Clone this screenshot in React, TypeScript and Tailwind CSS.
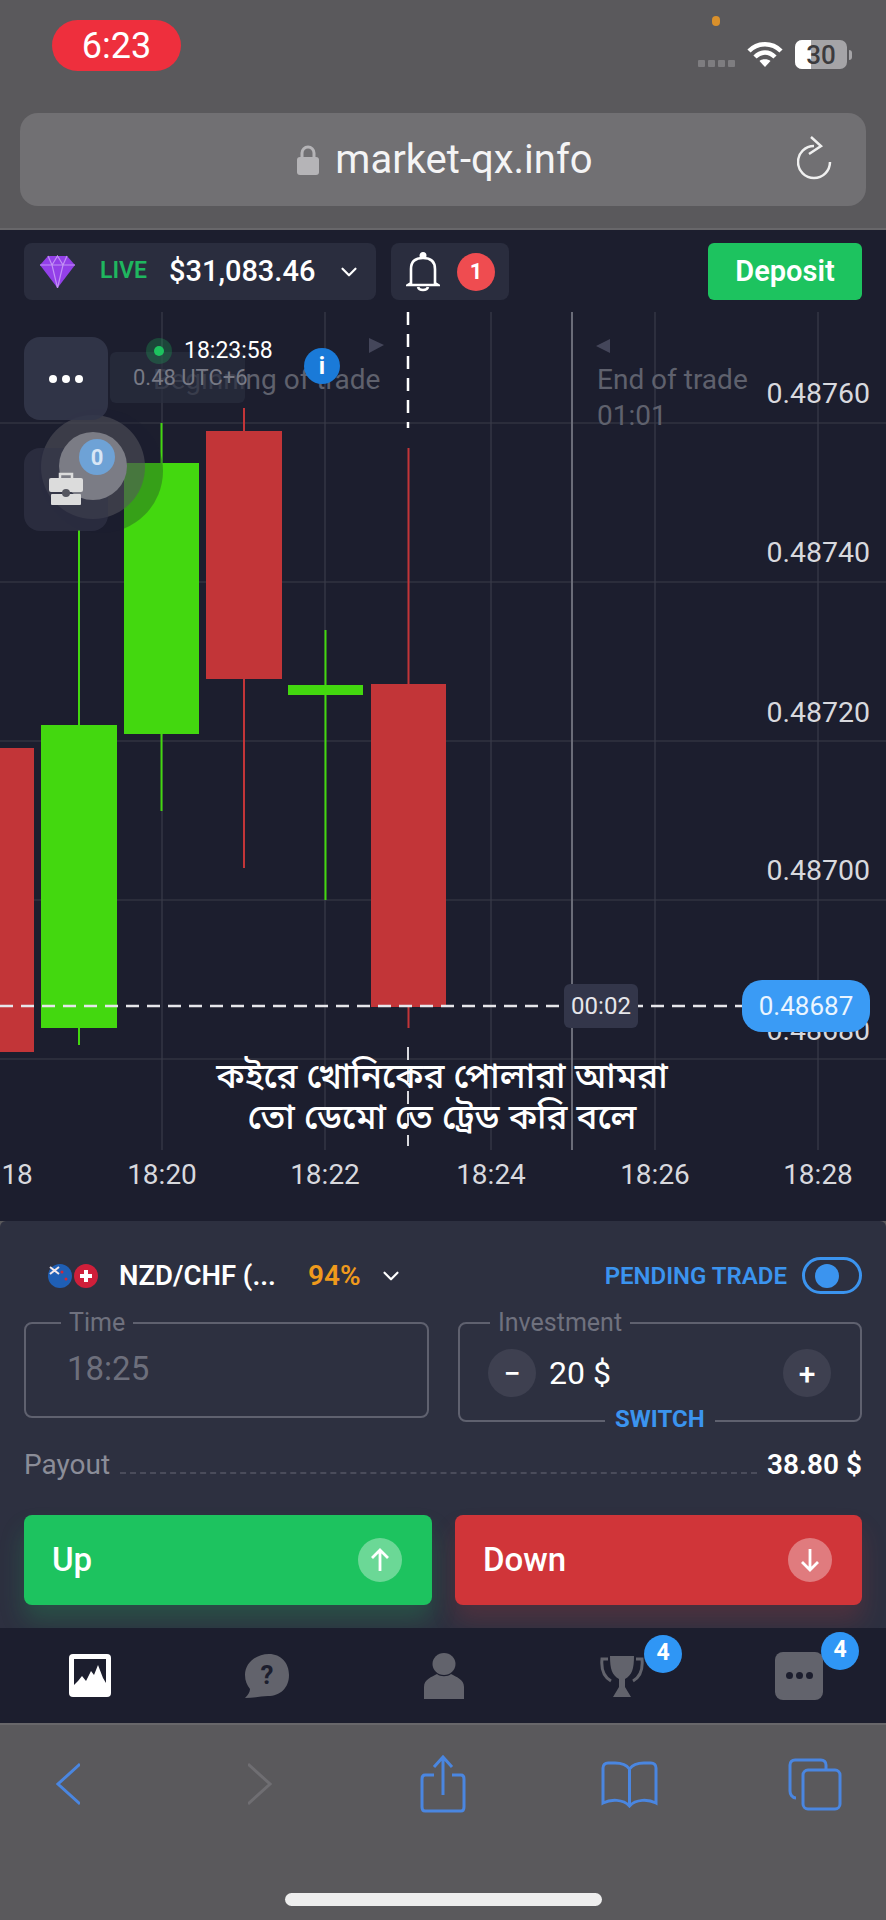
import React from 'react';
import { ChevronDown } from 'lucide-react';

// chart geometry, page y coordinates (the chart area starts at y=230)
const TOP = 230;
const gridX = [162, 325, 491, 655, 818];
const gridY = [423, 582, 741, 900, 1059];
const priceLabels = [
  { y: 394, text: '0.48760' },
  { y: 553, text: '0.48740' },
  { y: 713, text: '0.48720' },
  { y: 871, text: '0.48700' },
  { y: 1031, text: '0.48680' },
];
const timeLabels = [
  { x: -2, text: '18:18' },
  { x: 162, text: '18:20' },
  { x: 325, text: '18:22' },
  { x: 491, text: '18:24' },
  { x: 655, text: '18:26' },
  { x: 818, text: '18:28' },
];
const GREEN = '#43d80f';
const RED = '#c23538';
const candles = [
  { x: -30, w: 64, top: 748, bottom: 1052, hi: 748, lo: 1052, color: RED },
  { x: 41, w: 76, top: 725, bottom: 1028, hi: 530, lo: 1045, color: GREEN },
  { x: 124, w: 75, top: 463, bottom: 734, hi: 423, lo: 811, color: GREEN },
  { x: 206, w: 76, top: 431, bottom: 679, hi: 408, lo: 868, color: RED },
  { x: 288, w: 75, top: 685, bottom: 695, hi: 630, lo: 900, color: GREEN },
  { x: 371, w: 75, top: 684, bottom: 1007, hi: 448, lo: 1028, color: RED },
];

function Chart() {
  return (
    <svg className="absolute left-0 top-0" width="886" height="991" viewBox={`0 ${TOP} 886 991`}>
      {gridX.map((x) => (
        <line key={x} x1={x} x2={x} y1={312} y2={1150} stroke="#3e404e" strokeWidth="1" />
      ))}
      {gridY.map((y) => (
        <line key={y} x1={0} x2={886} y1={y} y2={y} stroke="#3a3c48" strokeWidth="1" />
      ))}
      <line x1={572} x2={572} y1={312} y2={1150} stroke="#6a6c78" strokeWidth="2" />
      {candles.map((c) => (
        <g key={c.x}>
          <line x1={c.x + c.w / 2} x2={c.x + c.w / 2} y1={c.hi} y2={c.lo} stroke={c.color} strokeWidth="2" />
          <rect x={c.x} y={c.top} width={c.w} height={c.bottom - c.top} fill={c.color} />
        </g>
      ))}
      <line x1={408} x2={408} y1={312} y2={428} stroke="#fff" strokeWidth="2.5" strokeDasharray="13 9" />
      <line x1={408} x2={408} y1={1047} y2={1146} stroke="#d8d9de" strokeWidth="2" strokeDasharray="13 9" />
      <line x1={0} x2={745} y1={1006} y2={1006} stroke="#e6e6ea" strokeWidth="2.5" strokeDasharray="13 8" />
      <polygon points="369,338 384,345 369,353" fill="#44465a" />
      <polygon points="610,339 596,346 610,353" fill="#44465a" />
      {/* halo around the open trades button */}
      <circle cx="101" cy="471" r="62" fill="#1c1e2e" fillOpacity="0.3" />
      <circle cx="93" cy="467" r="52" fill="#55565f" fillOpacity="0.55" />
    </svg>
  );
}

function NavBadge({ right }: { right: string }) {
  return (
    <span className={`absolute top-[-20px] ${right} flex h-[38px] w-[38px] items-center justify-center rounded-full bg-[#2f96f5] text-[23px] font-bold text-white`}>
      4
    </span>
  );
}

export default function App() {
  return (
    <div className="flex h-[1920px] w-[886px] flex-col overflow-hidden bg-[#5a595c] text-white" style={{ fontFamily: 'Roboto, "Noto Sans", "DejaVu Sans", sans-serif' }}>
      {/* Status bar + url bar */}
      <div className="h-[230px] shrink-0 border-b-2 border-[#68676a] px-5">
        <div className="flex h-[113px] items-start justify-between">
          <div className="mt-[20px] ml-[32px] flex h-[51px] w-[129px] items-center justify-center rounded-[26px] bg-[#ee2f3d] text-[36px] leading-none">6:23</div>
          <div className="relative mt-[40px] mr-[14px] flex items-center gap-[12px]">
            <span className="absolute left-[14px] top-[-24px] h-[10px] w-[8px] rounded-full bg-[#d9902b]" />
            <div className="mt-[18px] flex gap-[3px]">
              <span className="h-[7px] w-[7px] rounded-[1px] bg-[#7e7d80]" />
              <span className="h-[7px] w-[7px] rounded-[1px] bg-[#7e7d80]" />
              <span className="h-[7px] w-[7px] rounded-[1px] bg-[#7e7d80]" />
              <span className="h-[7px] w-[7px] rounded-[1px] bg-[#7e7d80]" />
            </div>
            <svg width="36" height="27" viewBox="0 0 36 27" fill="none" stroke="#fff" strokeWidth="4.5">
              <path d="M2 10 C11 1 25 1 34 10" />
              <path d="M8 16 C14 10 22 10 28 16" />
              <path d="M18 26 L12.5 20 C15 17.5 21 17.5 23.5 20 Z" fill="#fff" stroke="none" />
            </svg>
            <div className="relative flex h-[29px] w-[52px] items-center justify-center overflow-hidden rounded-[7px] bg-[#a5a4a7] text-[26px] font-medium leading-none text-[#3c3b3e]">
              <span className="absolute inset-y-0 left-0 w-[16px] bg-white" />
              <span className="relative">30</span>
            </div>
            <span className="-ml-[10px] h-[10px] w-[3px] rounded-r-full bg-[#a5a4a7]" />
          </div>
        </div>
        <div className="relative flex h-[93px] items-center justify-center gap-[16px] rounded-[18px] bg-[#717073] pl-[4px]">
          <svg width="22" height="30" viewBox="0 0 22 30">
            <path d="M5 13 V8 a6 6 0 0 1 12 0 V13" fill="none" stroke="#b5b4b7" strokeWidth="3" />
            <rect x="0" y="12" width="22" height="18" rx="3" fill="#b5b4b7" />
          </svg>
          <span className="text-[40px] leading-none text-[#f4f4f5]">market-qx.info</span>
          <svg className="absolute right-[33px] top-[23px]" width="36" height="44" viewBox="0 0 36 44" fill="none" stroke="#f0f0f0" strokeWidth="2.5">
            <path d="M17 10 A16 16 0 1 0 33 26" />
            <path d="M14 1 L24 10 L12 18" />
          </svg>
        </div>
      </div>

      {/* App: chart */}
      <div className="relative h-[991px] shrink-0 overflow-hidden bg-[#1c1e2e]">
        <Chart />

        <div className="relative flex items-start px-6 pt-[13px]">
          <div className="flex h-[57px] w-[352px] items-center rounded-lg bg-[#2a2d3e] pl-4">
            <svg className="shrink-0" width="35" height="33" viewBox="0 0 35 33">
              <polygon points="8,1 27,1 35,10 17.5,33 0,10" fill="#9340e8" />
              <path d="M0 10 H35 M8 1 L12 10 L17.5 33 L23 10 L27 1 M12 10 L17.5 1 L23 10" fill="none" stroke="#c290f5" strokeWidth="1.2" />
            </svg>
            <span className="ml-[25px] text-[23px] font-semibold text-[#1fb65f]">LIVE</span>
            <span className="ml-[22px] whitespace-nowrap text-[29px] font-medium leading-none">$31,083.46</span>
            <ChevronDown className="ml-[21px] shrink-0" size={26} strokeWidth={2} />
          </div>
          <div className="ml-[15px] flex h-[57px] w-[118px] items-center rounded-lg bg-[#2a2d3e] pl-[15px]">
            <svg width="34" height="40" viewBox="0 0 34 40" fill="none" stroke="#fff" strokeWidth="2.6">
              <path d="M5 31 V17 C5 9 10 6 17 6 C24 6 29 9 29 17 V31 L32 33 H2 Z" />
              <circle cx="17" cy="3.5" r="2.2" fill="#fff" />
              <path d="M12 35 C13 39 21 39 22 35" />
            </svg>
            <span className="ml-[17px] flex h-[38px] w-[38px] items-center justify-center rounded-full bg-[#ef4c50] text-[22px] font-bold">1</span>
          </div>
          <div className="ml-auto flex h-[57px] w-[154px] items-center justify-center rounded-md bg-[#1dc35f] text-[29px] font-semibold">Deposit</div>
        </div>

        {/* Overlays on the chart */}
        <div className="absolute left-[153px] top-[135px] whitespace-nowrap text-[28px] leading-[30px] text-[#5f616d]">Beginning of trade</div>
        <div className="absolute left-[597px] top-[132px] text-[28px] leading-[36px] text-[#5f616d]">
          End of trade
          <br />
          01:01
        </div>
        <div className="absolute left-[110px] top-[122px] flex h-[51px] w-[135px] items-center whitespace-nowrap rounded-md bg-[#2a2d3e]/70 pl-[23px] text-[22px] text-[#777985]">0.48 UTC+6</div>
        <span className="absolute left-[146px] top-[108px] h-[26px] w-[26px] rounded-full bg-[#1dc35f]/25" />
        <span className="absolute left-[154px] top-[116px] h-[10px] w-[10px] rounded-full bg-[#1dc35f]" />
        <span className="absolute left-[184px] top-[108px] text-[23px] leading-[26px]">18:23:58</span>
        <span className="absolute left-[304px] top-[118px] flex h-9 w-9 items-center justify-center rounded-full bg-[#1a7ad8] text-[24px] font-bold">i</span>
        <div className="absolute left-[24px] top-[107px] flex h-[83px] w-[84px] items-center justify-center gap-[5px] rounded-2xl bg-[#33364a]/90">
          <span className="h-2 w-2 rounded-full bg-white" />
          <span className="h-2 w-2 rounded-full bg-white" />
          <span className="h-2 w-2 rounded-full bg-white" />
        </div>
        <div className="absolute left-[24px] top-[218px] h-[83px] w-[84px] rounded-2xl bg-[#33364a]/60" />
        <span className="absolute left-[59px] top-[202px] h-[68px] w-[68px] rounded-full bg-[#7b7c85]" />
        <span className="absolute left-[79px] top-[209px] flex h-9 w-9 items-center justify-center rounded-full bg-[#6ea2d6] text-[22px] font-bold text-[#d8e6f5]">0</span>
        <svg className="absolute left-[49px] top-[242px]" width="34" height="33" viewBox="0 0 34 33">
          <path d="M11 6 V2 H23 V6" fill="none" stroke="#dcdcdc" strokeWidth="2.5" />
          <rect x="0" y="6" width="34" height="14" rx="2" fill="#dcdcdc" />
          <rect x="2" y="22" width="30" height="11" rx="1" fill="#dcdcdc" />
          <circle cx="17" cy="21" r="4" fill="#55565f" />
        </svg>

        {priceLabels.map((p) => (
          <span key={p.text} className="absolute right-[16px] text-[28.5px] leading-[30px] text-[#d8d9de]" style={{ top: p.y - 230 - 15 }}>
            {p.text}
          </span>
        ))}
        <div className="absolute left-[564px] top-[754px] flex h-[44px] w-[74px] items-center justify-center rounded-md bg-[#33364a] text-[24px] text-[#e6e6ea]">00:02</div>
        <div className="absolute left-[742px] top-[750px] flex h-[52px] w-[128px] items-center justify-center rounded-[20px] bg-[#3a9bf5] text-[26px] text-[#eaf5ff]">0.48687</div>

        <div className="absolute left-[150px] top-[829px] w-[584px] text-center text-[35px] font-medium leading-[41px]" style={{ fontFamily: '"Noto Sans Bengali", "Noto Sans", "DejaVu Sans", sans-serif' }}>
          কইরে খোনিকের পোলারা আমরা
          <br />
          তো ডেমো তে ট্রেড করি বলে
        </div>

        {timeLabels.map((t) => (
          <span key={t.text} className="absolute w-[80px] text-center text-[28px] leading-[30px] text-[#d8d9de]" style={{ left: t.x - 40, top: 930 }}>
            {t.text}
          </span>
        ))}
      </div>

      {/* Trade panel */}
      <div className="relative h-[407px] shrink-0 rounded-t-md bg-[#2d3040] px-6">
        <div className="flex h-[91px] items-center pt-[18px]">
          <svg className="ml-[24px] shrink-0" width="50" height="26" viewBox="0 0 50 26">
            <circle cx="12" cy="13" r="12" fill="#1f5fb5" />
            <path d="M2 4 L11 11 M11 4 L2 11" stroke="#f2e8ea" strokeWidth="2" />
            <circle cx="18" cy="16" r="1.5" fill="#d3263a" />
            <circle cx="14" cy="9" r="1.5" fill="#d3263a" />
            <circle cx="38" cy="13" r="12" fill="#cf1f3a" />
            <path d="M38 7 V19 M32 13 H44" stroke="#fff" strokeWidth="4" />
          </svg>
          <span className="ml-[21px] whitespace-nowrap text-[27.5px] font-semibold">NZD/CHF (...</span>
          <span className="ml-[32px] text-[28px] font-semibold text-[#ef9a1c]">94%</span>
          <ChevronDown className="ml-[17px] shrink-0" size={26} strokeWidth={2} />
          <span className="ml-auto whitespace-nowrap text-[24px] font-semibold text-[#3b94ef]">PENDING TRADE</span>
          <div className="ml-[15px] flex h-[37px] w-[60px] shrink-0 items-center rounded-full border-[3px] border-[#3b94ef] pl-[10px]">
            <span className="h-6 w-6 rounded-full bg-[#3b94ef]" />
          </div>
        </div>

        <div className="flex items-start gap-[29px]">
          <fieldset className="h-[106px] w-[405px] rounded-lg border-2 border-[#5f616f] pl-[35px] pr-2">
            <legend className="px-2 text-[25px] leading-[22px] text-[#6f717e]">Time</legend>
            <div className="ml-[6px] mt-[17px] text-[33px] leading-[36px] text-[#6d6f7c]">18:25</div>
          </fieldset>
          <fieldset className="relative h-[110px] w-[404px] rounded-lg border-2 border-[#5f616f] pl-[30px] pr-2">
            <legend className="px-2 text-[25px] leading-[22px] text-[#6f717e]">Investment</legend>
            <div className="mt-[15px] flex h-12 items-center">
              <span className="-ml-[2px] flex h-12 w-12 items-center justify-center rounded-full bg-[#3e4050] text-[30px] font-medium">−</span>
              <span className="ml-[13px] text-[32px]">20 $</span>
              <span className="ml-auto mr-[21px] flex h-12 w-12 items-center justify-center rounded-full bg-[#3e4050] text-[30px] font-medium">+</span>
            </div>
            <span className="absolute bottom-[-12px] left-[145px] bg-[#2d3040] px-[10px] text-[24px] font-bold leading-[26px] text-[#3b94ef]">SWITCH</span>
          </fieldset>
        </div>

        <div className="mt-[26px] flex items-center">
          <span className="text-[28px] leading-[34px] text-[#8b8d98]">Payout</span>
          <span className="mx-[10px] mt-[16px] flex-1 border-b-2 border-dashed border-[#4a4c5b]" />
          <span className="text-[28px] font-semibold leading-[34px]">38.80 $</span>
        </div>

        <div className="mt-[33px] flex justify-between">
          <div className="flex h-[90px] w-[408px] items-center justify-between rounded-lg bg-[#1dc35f] pl-7 pr-[30px] text-[33px] font-medium shadow-[0_16px_24px_rgba(29,195,95,0.22)]">
            Up
            <span className="flex h-[44px] w-[44px] items-center justify-center rounded-full bg-white/35">
              <svg width="20" height="24" viewBox="0 0 20 24" fill="none" stroke="#fff" strokeWidth="2.8"><path d="M10 23 V2 M2 10 L10 2 L18 10" /></svg>
            </span>
          </div>
          <div className="flex h-[90px] w-[407px] items-center justify-between rounded-lg bg-[#d03539] pl-7 pr-[30px] text-[33px] font-medium shadow-[0_16px_24px_rgba(208,53,57,0.2)]">
            Down
            <span className="flex h-[44px] w-[44px] items-center justify-center rounded-full bg-white/35">
              <svg width="20" height="24" viewBox="0 0 20 24" fill="none" stroke="#fff" strokeWidth="2.8"><path d="M10 1 V22 M2 14 L10 22 L18 14" /></svg>
            </span>
          </div>
        </div>
      </div>

      {/* App nav */}
      <div className="relative z-10 flex h-[95px] shrink-0 items-center bg-[#1c1e2e] pl-[69px]">
        <svg width="42" height="43" viewBox="0 0 42 43">
          <rect width="42" height="43" rx="4" fill="#fff" />
          <rect x="5" y="5" width="32" height="26" fill="#1c1e2e" />
          <path d="M5 31 L9 27 L13 22 L17 27 L22 17 L25 21 L29 11 L34 24 L37 29 V36 H5 Z" fill="#fff" />
        </svg>
        <svg className="ml-[134px]" width="44" height="44" viewBox="0 0 44 44">
          <path d="M24 0 C36 0 44 9 44 21 C44 34 35 42 23 42 C16 42 9 44 0 44 C3 41 5 38 5 35 C2 31 0 27 0 21 C0 9 11 0 24 0 Z" fill="#62636c" />
          <text x="22" y="30" textAnchor="middle" fontSize="26" fontWeight="700" fill="#1c1e2e">?</text>
        </svg>
        <svg className="ml-[135px]" width="40" height="46" viewBox="0 0 40 46">
          <ellipse cx="20" cy="11" rx="11.5" ry="11" fill="#62636c" />
          <path d="M0 46 V34 C0 26 8 24 13 21 C16 24 24 24 27 21 C32 24 40 26 40 34 V46 Z" fill="#62636c" />
        </svg>
        <div className="relative ml-[136px] h-[42px] w-[44px]">
          <svg width="44" height="42" viewBox="0 0 44 42" fill="none">
            <path d="M10 1 H34 C34 14 32 20 25 24 V32 L31 42 H13 L19 32 V24 C12 20 10 14 10 1 Z" fill="#62636c" />
            <path d="M8 4 H2 C1 14 4 22 11 26 M36 4 H42 C43 14 40 22 33 26" stroke="#62636c" strokeWidth="3" />
          </svg>
          <NavBadge right="right-[-38px]" />
        </div>
        <div className="relative ml-[131px] flex h-[48px] w-[48px] items-center justify-center gap-[3px] rounded-[8px] bg-[#62636c]">
          <span className="h-[7px] w-[7px] rounded-full bg-[#1c1e2e]" />
          <span className="h-[7px] w-[7px] rounded-full bg-[#1c1e2e]" />
          <span className="h-[7px] w-[7px] rounded-full bg-[#1c1e2e]" />
          <NavBadge right="right-[-36px]" />
        </div>
      </div>

      {/* Browser toolbar */}
      <div className="flex flex-1 flex-col border-t-2 border-[#68676a]">
        <div className="flex h-[118px] items-center pl-[56px]">
          <svg width="24" height="44" viewBox="0 0 24 44" fill="none" stroke="#4a86e0" strokeWidth="3"><path d="M24 2 L2 22 L24 42" /></svg>
          <svg className="ml-[168px]" width="24" height="44" viewBox="0 0 24 44" fill="none" stroke="#6f6e72" strokeWidth="3"><path d="M0 2 L22 22 L0 42" /></svg>
          <svg className="ml-[148px]" width="46" height="58" viewBox="0 0 46 58" fill="none" stroke="#4a86e0" strokeWidth="3">
            <path d="M14 20 H5 C3 20 2 21 2 24 V52 C2 55 3 56 5 56 H41 C43 56 44 55 44 52 V24 C44 21 43 20 41 20 H32" />
            <path d="M23 40 V2 M14 12 L23 2 L32 12" />
          </svg>
          <svg className="ml-[135px]" width="57" height="47" viewBox="0 0 57 47" fill="none" stroke="#4a86e0" strokeWidth="3">
            <path d="M28.5 8 C25 3 20 2 14 2 H7 C4 2 2 4 2 7 V42 C10 38 22 38 28.5 45 C35 38 47 38 55 42 V7 C55 4 53 2 50 2 H43 C37 2 32 3 28.5 8 Z M28.5 8 V45" />
          </svg>
          <svg className="ml-[130px]" width="54" height="53" viewBox="0 0 54 53" fill="none" stroke="#4a86e0" strokeWidth="3">
            <path d="M38 12 V7 C38 4 36 2 33 2 H7 C4 2 2 4 2 7 V33 C2 36 4 40 8 40" />
            <rect x="15" y="12" width="37" height="39" rx="5" />
          </svg>
        </div>
        <div className="mt-[50px] flex justify-center">
          <span className="ml-[1px] h-[13px] w-[317px] rounded-full bg-[#eeeeee]" />
        </div>
      </div>
    </div>
  );
}
